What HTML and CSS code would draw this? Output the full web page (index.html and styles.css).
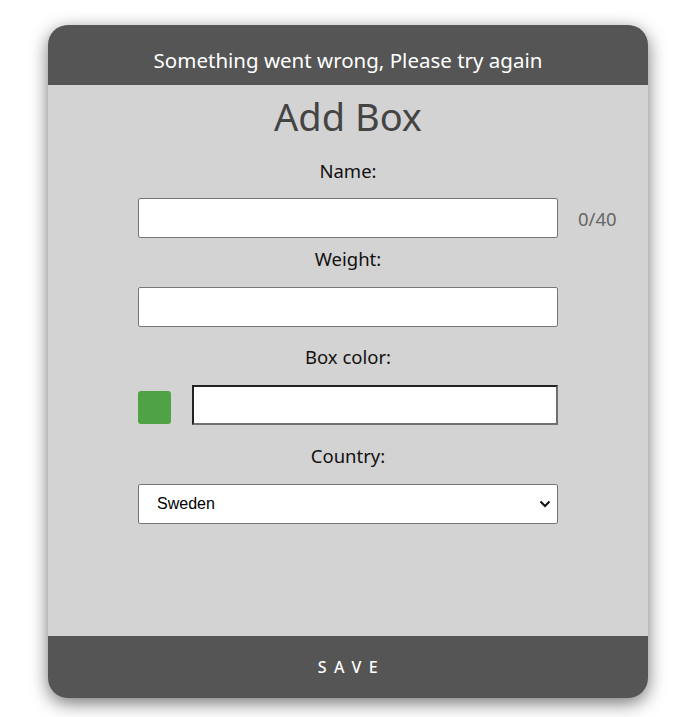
FILE: index.html
```html
<!DOCTYPE html>
<html>
<head>
<meta charset="utf-8">
<link rel="stylesheet" href="styles.css">
</head>
<body>
<div class="card">
  <div class="card-header">Something went wrong, Please try again</div>
  <div class="card-body">
    <h1 class="title">Add Box</h1>
    <div class="field field-name">
      <label class="label">Name:</label>
      <div class="name-row">
        <input class="text-input" type="text">
        <span class="counter">0/40</span>
      </div>
    </div>
    <div class="field field-weight">
      <label class="label">Weight:</label>
      <input class="text-input" type="text">
    </div>
    <div class="field field-color">
      <label class="label">Box color:</label>
      <div class="color-row">
        <span class="swatch"></span>
        <input class="text-input color-input" type="text">
      </div>
    </div>
    <div class="field field-country">
      <label class="label">Country:</label>
      <div class="select">
        <span class="select-value">Sweden</span>
        <svg class="chevron" width="12" height="8" viewBox="0 0 12 8"><path d="M1.5 1.5 L6 6 L10.5 1.5" fill="none" stroke="#111" stroke-width="2"/></svg>
      </div>
    </div>
  </div>
  <div class="card-footer">SAVE</div>
</div>
</body>
</html>
```
FILE: styles.css
```css
html, body {
  margin: 0;
  padding: 0;
  background: #ffffff;
}
body {
  font-family: "Noto Sans", "Open Sans", sans-serif;
  padding: 25px 0 0 48px;
  box-sizing: border-box;
  height: 717px;
  overflow: hidden;
}
.card {
  width: 600px;
  height: 673px;
  border-radius: 20px;
  overflow: hidden;
  background: #d3d3d3;
  box-shadow: 0 5px 18px rgba(0, 0, 0, 0.55);
  display: flex;
  flex-direction: column;
}
.card-header {
  height: 60px;
  flex: none;
  background: #555555;
  color: #ffffff;
  font-size: 20.5px;
  display: flex;
  align-items: center;
  justify-content: center;
  padding-top: 10px;
  box-sizing: border-box;
}
.card-body {
  flex: 1;
  padding: 0 0 0 90px;
}
.title {
  margin: 8px 0 0 0;
  width: 420px;
  text-align: center;
  font-weight: 400;
  font-size: 38px;
  line-height: 46px;
  color: #444444;
}
.field {
  width: 420px;
}
.label {
  display: block;
  text-align: center;
  font-size: 18.5px;
  line-height: 24px;
  color: #111111;
}
.field-name { margin-top: 20px; }
.field-name .label { margin-bottom: 15px; }
.field-weight { margin-top: 9px; }
.field-weight .label { margin-bottom: 16px; }
.field-color { margin-top: 18px; }
.field-color .label { margin-bottom: 16px; }
.field-country { margin-top: 19px; }
.field-country .label { margin-bottom: 16px; }

.name-row {
  display: grid;
  grid-template-columns: 420px auto;
  column-gap: 20px;
  align-items: center;
}
.counter {
  font-size: 18.5px;
  color: #666666;
  white-space: nowrap;
}
.text-input {
  display: block;
  width: 420px;
  height: 40px;
  box-sizing: border-box;
  border: 1px solid #767676;
  border-radius: 2px;
  background: #ffffff;
  margin: 0;
  padding: 0 8px;
  outline: none;
}
.color-row {
  display: flex;
  align-items: center;
  gap: 21px;
}
.swatch {
  width: 33px;
  height: 33px;
  border-radius: 3px;
  background: #4fa344;
  flex: none;
  margin-top: 4px;
}
.color-input {
  width: 366px;
  border-width: 2px;
  border-style: solid;
  border-color: #222222 #707070 #707070 #222222;
  border-radius: 0;
}
.select {
  width: 420px;
  height: 40px;
  box-sizing: border-box;
  border: 1px solid #767676;
  border-radius: 2px;
  background: #ffffff;
  display: flex;
  align-items: center;
  justify-content: space-between;
  padding: 0 6px 0 18px;
}
.select-value {
  font-family: "Liberation Sans", Arial, sans-serif;
  font-size: 16px;
  color: #000000;
}
.chevron {
  display: block;
}
.card-footer {
  height: 62px;
  flex: none;
  background: #555555;
  color: #ffffff;
  font-size: 16px;
  font-weight: 500;
  letter-spacing: 7.5px;
  display: flex;
  align-items: center;
  justify-content: center;
  padding-left: 7px;
}
```
